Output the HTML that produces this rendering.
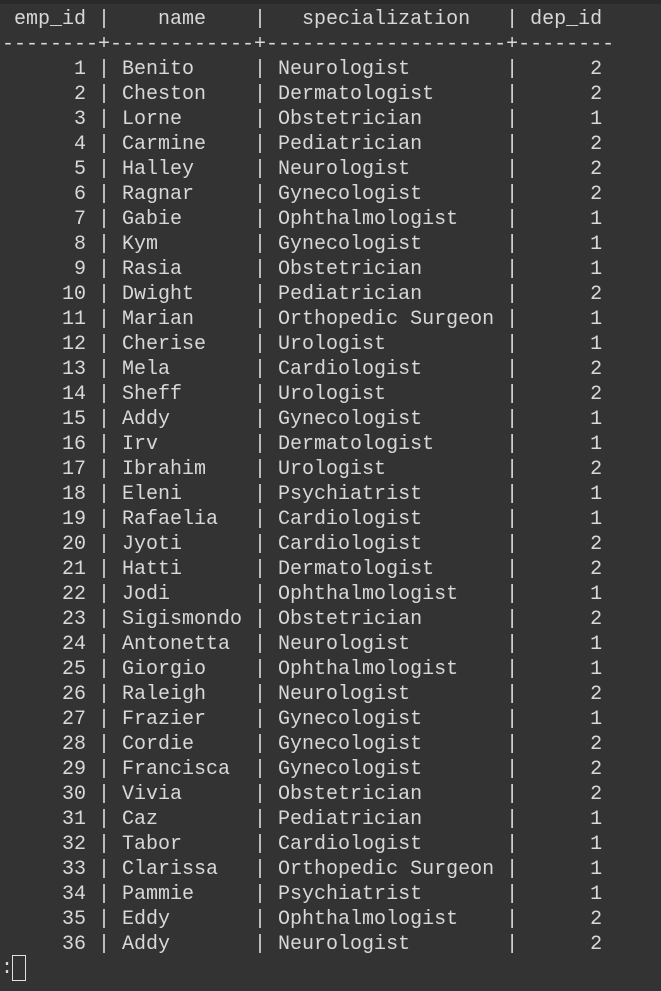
<!DOCTYPE html>
<html><head><style>
html,body{margin:0;padding:0;}
body{width:661px;height:991px;background:#333333;overflow:hidden;position:relative;}
.top{position:absolute;left:0;top:0;width:661px;height:4px;background:#2a2a2a;}
pre{position:absolute;left:2px;top:7px;margin:0;font-family:"Liberation Mono",monospace;font-size:20px;line-height:25px;color:#d8d8d8;}
.cur{position:absolute;left:12px;top:955px;width:14px;height:26px;border:1.5px solid #e0e0e0;box-sizing:border-box;}
</style></head><body>
<div class="top"></div>
<pre> emp_id |    name    |   specialization   | dep_id
--------+------------+--------------------+--------
      1 | Benito     | Neurologist        |      2
      2 | Cheston    | Dermatologist      |      2
      3 | Lorne      | Obstetrician       |      1
      4 | Carmine    | Pediatrician       |      2
      5 | Halley     | Neurologist        |      2
      6 | Ragnar     | Gynecologist       |      2
      7 | Gabie      | Ophthalmologist    |      1
      8 | Kym        | Gynecologist       |      1
      9 | Rasia      | Obstetrician       |      1
     10 | Dwight     | Pediatrician       |      2
     11 | Marian     | Orthopedic Surgeon |      1
     12 | Cherise    | Urologist          |      1
     13 | Mela       | Cardiologist       |      2
     14 | Sheff      | Urologist          |      2
     15 | Addy       | Gynecologist       |      1
     16 | Irv        | Dermatologist      |      1
     17 | Ibrahim    | Urologist          |      2
     18 | Eleni      | Psychiatrist       |      1
     19 | Rafaelia   | Cardiologist       |      1
     20 | Jyoti      | Cardiologist       |      2
     21 | Hatti      | Dermatologist      |      2
     22 | Jodi       | Ophthalmologist    |      1
     23 | Sigismondo | Obstetrician       |      2
     24 | Antonetta  | Neurologist        |      1
     25 | Giorgio    | Ophthalmologist    |      1
     26 | Raleigh    | Neurologist        |      2
     27 | Frazier    | Gynecologist       |      1
     28 | Cordie     | Gynecologist       |      2
     29 | Francisca  | Gynecologist       |      2
     30 | Vivia      | Obstetrician       |      2
     31 | Caz        | Pediatrician       |      1
     32 | Tabor      | Cardiologist       |      1
     33 | Clarissa   | Orthopedic Surgeon |      1
     34 | Pammie     | Psychiatrist       |      1
     35 | Eddy       | Ophthalmologist    |      2
     36 | Addy       | Neurologist        |      2
</pre>
<pre style="left:1px;top:956px;">:</pre>
<div class="cur"></div>
</body></html>
